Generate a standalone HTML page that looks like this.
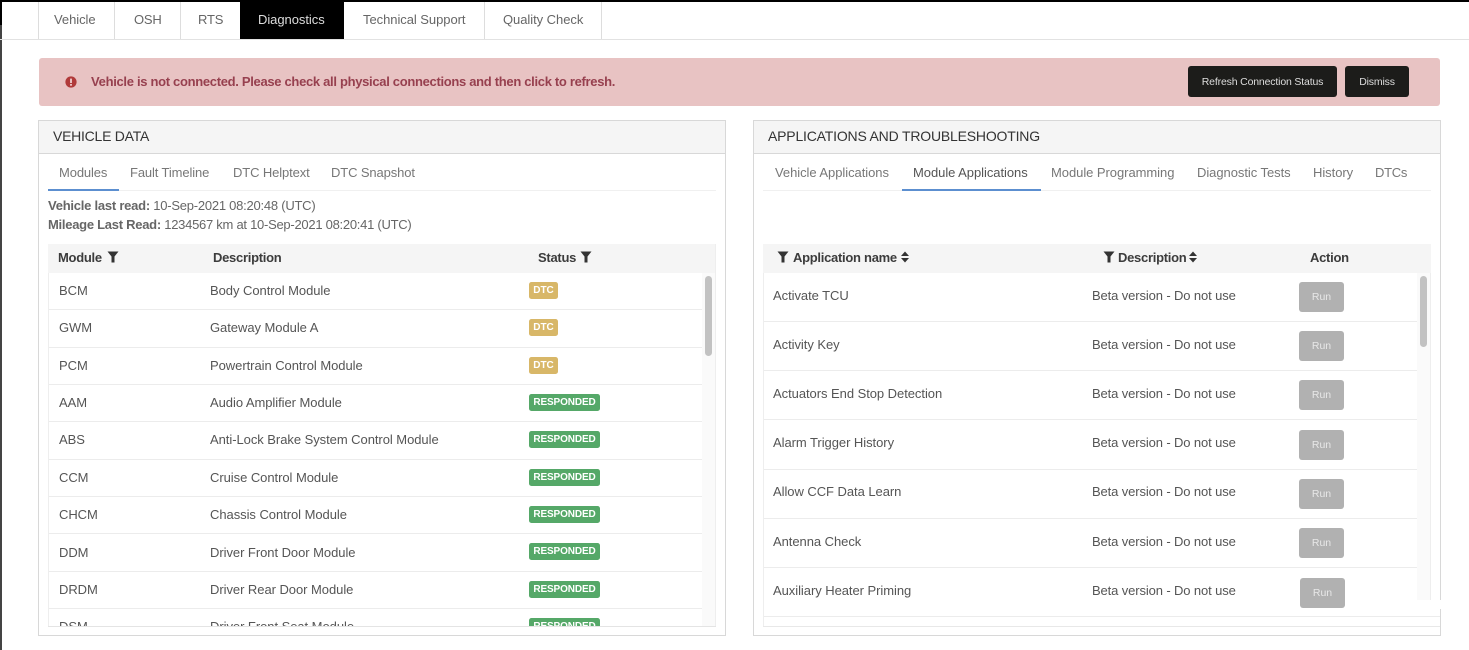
<!DOCTYPE html>
<html><head><meta charset="utf-8">
<style>
html,body{margin:0;padding:0;background:#fff}
body{width:1469px;height:650px;overflow:hidden;position:relative;font-family:"Liberation Sans",sans-serif;font-size:13px;color:#555}
.a,.t{position:absolute;white-space:nowrap}
.t{line-height:16px;letter-spacing:-.05px}
.b{position:absolute;box-sizing:border-box}
.g{color:#666}
.tb{color:#777;letter-spacing:-.12px}
.hd{font-weight:bold;color:#3c3c3c;letter-spacing:-.28px}
.row{position:absolute;height:1px;background:#ececec}
.badge{position:absolute;left:529px;height:17px;border-radius:2.5px;color:#fff;font-size:10px;font-weight:bold;line-height:18px;text-align:center}
.dtc{width:29px;background:#d8b768}
.res{width:71px;background:#55a868;letter-spacing:-.12px}
.run{position:absolute;width:45px;height:30px;background:#b1b1b1;border-radius:3px;color:#e8e8e8;font-size:10.5px;line-height:30px;text-align:center}
.btn{position:absolute;top:66px;height:31px;background:#1c1c1a;border-radius:3px;color:#ddd;font-size:10.5px;line-height:32px;text-align:center;letter-spacing:-.16px}
svg{position:absolute}
</style></head><body>
<div class="b" style="left:0;top:0;width:1469px;height:2px;background:#000"></div>
<div class="b" style="left:0;top:0;width:1.5px;height:650px;background:#444"></div>
<div class="b" style="left:0;top:0;width:1.5px;height:25px;background:#000"></div>
<div class="b" style="left:0;top:39px;width:1469px;height:1px;background:#e2e2e2"></div>
<div class="b" style="left:38px;top:2px;width:1px;height:37px;background:#ddd"></div>
<div class="b" style="left:114px;top:2px;width:1px;height:37px;background:#ddd"></div>
<div class="b" style="left:180px;top:2px;width:1px;height:37px;background:#ddd"></div>
<div class="b" style="left:240px;top:2px;width:104px;height:37px;background:#000"></div>
<div class="b" style="left:484px;top:2px;width:1px;height:37px;background:#ddd"></div>
<div class="b" style="left:601px;top:2px;width:1px;height:37px;background:#ddd"></div>
<div class="t g" style="left:54px;top:12px">Vehicle</div>
<div class="t g" style="left:134px;top:12px;letter-spacing:-.2px">OSH</div>
<div class="t g" style="left:198px;top:12px;letter-spacing:-.2px">RTS</div>
<div class="t" style="left:258px;top:12px;color:#ddd">Diagnostics</div>
<div class="t g" style="left:363px;top:12px">Technical Support</div>
<div class="t g" style="left:503px;top:12px">Quality Check</div>

<div class="b" style="left:39px;top:58px;width:1401px;height:48px;background:#e8c3c3;border-radius:3px"></div>
<svg style="left:65px;top:76px" width="12" height="12" viewBox="0 0 12 12"><circle cx="6" cy="6" r="5.6" fill="#b03a3a"/><rect x="5.1" y="2.6" width="1.8" height="4.4" fill="#f0d0d0"/><rect x="5.1" y="8" width="1.8" height="1.7" fill="#f0d0d0"/></svg>
<div class="t" style="left:91px;top:74px;font-weight:bold;color:#97404f;letter-spacing:-.31px">Vehicle is not connected. Please check all physical connections and then click to refresh.</div>
<div class="btn" style="left:1188px;width:149px">Refresh Connection Status</div>
<div class="btn" style="left:1345px;width:64px">Dismiss</div>

<!-- left panel -->
<div class="b" style="left:38px;top:120px;width:688px;height:516px;border:1px solid #d8d8d8;background:#fff"></div>
<div class="b" style="left:39px;top:121px;width:686px;height:33px;background:#f5f5f5;border-bottom:1px solid #d8d8d8"></div>
<div class="t" style="left:53px;top:128px;font-size:14px;color:#333;letter-spacing:-.25px">VEHICLE DATA</div>
<div class="b" style="left:48px;top:190px;width:668px;height:1px;background:#f0f0f0"></div>
<div class="b" style="left:48px;top:189px;width:71px;height:2px;background:#5c8fd0"></div>
<div class="t tb" style="left:59px;top:165px">Modules</div>
<div class="t tb" style="left:130px;top:165px">Fault Timeline</div>
<div class="t tb" style="left:233px;top:165px">DTC Helptext</div>
<div class="t tb" style="left:331px;top:165px">DTC Snapshot</div>
<div class="t" style="left:48px;top:198px;color:#666;letter-spacing:-.24px"><b>Vehicle last read:</b> 10-Sep-2021 08:20:48 (UTC)</div>
<div class="t" style="left:48px;top:217px;color:#666;letter-spacing:-.27px"><b>Mileage Last Read:</b> 1234567 km at 10-Sep-2021 08:20:41 (UTC)</div>
<div class="b" style="left:48px;top:244px;width:668px;height:29px;background:#f5f5f5"></div>
<div class="b" style="left:48px;top:273px;width:1px;height:353px;background:#eee"></div>
<div class="b" style="left:715px;top:244px;width:1px;height:382px;background:#eee"></div>
<div class="t hd" style="left:58px;top:250px">Module</div>
<svg style="left:107px;top:251px" width="12" height="12" viewBox="0 0 12 12"><path d="M.5 .5H11.500L7.500 5.500V11.500H4.500V5.500Z" fill="#333"/></svg>
<div class="t hd" style="left:213px;top:250px">Description</div>
<div class="t hd" style="left:538px;top:250px">Status</div>
<svg style="left:580px;top:251px" width="12" height="12" viewBox="0 0 12 12"><path d="M.5 .5H11.500L7.500 5.500V11.500H4.500V5.500Z" fill="#333"/></svg>
<div class="b" style="left:702px;top:273px;width:13px;height:353px;background:#fafafa"></div>
<div class="b" style="left:705px;top:276px;width:7px;height:80px;background:#c2c2c2;border-radius:4px"></div>

<div class="t" style="left:59px;top:283px">BCM</div><div class="t" style="left:210px;top:283px">Body Control Module</div><div class="badge dtc" style="top:282px">DTC</div><div class="row" style="left:49px;top:309px;width:653px"></div>
<div class="t" style="left:59px;top:320px">GWM</div><div class="t" style="left:210px;top:320px">Gateway Module A</div><div class="badge dtc" style="top:319px">DTC</div><div class="row" style="left:49px;top:347px;width:653px"></div>
<div class="t" style="left:59px;top:358px">PCM</div><div class="t" style="left:210px;top:358px">Powertrain Control Module</div><div class="badge dtc" style="top:357px">DTC</div><div class="row" style="left:49px;top:384px;width:653px"></div>
<div class="t" style="left:59px;top:395px">AAM</div><div class="t" style="left:210px;top:395px">Audio Amplifier Module</div><div class="badge res" style="top:394px">RESPONDED</div><div class="row" style="left:49px;top:421px;width:653px"></div>
<div class="t" style="left:59px;top:432px">ABS</div><div class="t" style="left:210px;top:432px">Anti-Lock Brake System Control Module</div><div class="badge res" style="top:431px">RESPONDED</div><div class="row" style="left:49px;top:459px;width:653px"></div>
<div class="t" style="left:59px;top:470px">CCM</div><div class="t" style="left:210px;top:470px">Cruise Control Module</div><div class="badge res" style="top:469px">RESPONDED</div><div class="row" style="left:49px;top:496px;width:653px"></div>
<div class="t" style="left:59px;top:507px">CHCM</div><div class="t" style="left:210px;top:507px">Chassis Control Module</div><div class="badge res" style="top:506px">RESPONDED</div><div class="row" style="left:49px;top:533px;width:653px"></div>
<div class="t" style="left:59px;top:545px">DDM</div><div class="t" style="left:210px;top:545px">Driver Front Door Module</div><div class="badge res" style="top:543px">RESPONDED</div><div class="row" style="left:49px;top:571px;width:653px"></div>
<div class="t" style="left:59px;top:582px">DRDM</div><div class="t" style="left:210px;top:582px">Driver Rear Door Module</div><div class="badge res" style="top:581px">RESPONDED</div><div class="row" style="left:49px;top:608px;width:653px"></div>
<div class="a" style="left:49px;top:609px;width:653px;height:17px;overflow:hidden">
<div class="t" style="left:10px;top:10px">DSM</div><div class="t" style="left:161px;top:10px">Driver Front Seat Module</div><div class="badge res" style="left:480px;top:9px">RESPONDED</div></div>
<div class="b" style="left:48px;top:626px;width:668px;height:1px;background:#e4e4e4"></div>

<!-- right panel -->
<div class="b" style="left:753px;top:120px;width:688px;height:516px;border:1px solid #d8d8d8;background:#fff"></div>
<div class="b" style="left:754px;top:121px;width:686px;height:33px;background:#f5f5f5;border-bottom:1px solid #d8d8d8"></div>
<div class="t" style="left:768px;top:128px;font-size:14px;color:#333;letter-spacing:-.19px">APPLICATIONS AND TROUBLESHOOTING</div>
<div class="b" style="left:763px;top:190px;width:668px;height:1px;background:#f0f0f0"></div>
<div class="b" style="left:902px;top:189px;width:139px;height:2px;background:#5c8fd0"></div>
<div class="t" style="left:775px;top:165px;color:#777">Vehicle Applications</div>
<div class="t" style="left:913px;top:165px;color:#555">Module Applications</div>
<div class="t" style="left:1051px;top:165px;color:#777">Module Programming</div>
<div class="t" style="left:1197px;top:165px;color:#777">Diagnostic Tests</div>
<div class="t" style="left:1313px;top:165px;color:#777">History</div>
<div class="t" style="left:1375px;top:165px;color:#777;letter-spacing:-.3px">DTCs</div>
<div class="b" style="left:763px;top:244px;width:668px;height:29px;background:#f5f5f5"></div>
<div class="b" style="left:763px;top:273px;width:1px;height:353px;background:#eee"></div>
<div class="b" style="left:1430px;top:273px;width:1px;height:353px;background:#eee"></div>
<svg style="left:777px;top:251px" width="12" height="12" viewBox="0 0 12 12"><path d="M.5 .5H11.500L7.500 5.500V11.500H4.500V5.500Z" fill="#333"/></svg>
<div class="t hd" style="left:793px;top:250px">Application name</div>
<svg style="left:900px;top:251px" width="10" height="12" viewBox="0 0 10 12"><path d="M5 .5L9 5H1ZM5 11.500L9 7H1Z" fill="#333"/></svg>
<svg style="left:1103px;top:251px" width="12" height="12" viewBox="0 0 12 12"><path d="M.5 .5H11.500L7.500 5.500V11.500H4.500V5.500Z" fill="#333"/></svg>
<div class="t hd" style="left:1118px;top:250px">Description</div>
<svg style="left:1188px;top:251px" width="10" height="12" viewBox="0 0 10 12"><path d="M5 .5L9 5H1ZM5 11.500L9 7H1Z" fill="#333"/></svg>
<div class="t hd" style="left:1310px;top:250px">Action</div>
<div class="b" style="left:1417px;top:273px;width:13px;height:353px;background:#fafafa"></div>
<div class="b" style="left:1420px;top:276px;width:7px;height:71px;background:#c2c2c2;border-radius:4px"></div>

<div class="t" style="left:773px;top:288px">Activate TCU</div><div class="t" style="left:1092px;top:288px;letter-spacing:-.12px">Beta version - Do not use</div><div class="run" style="left:1299px;top:282px">Run</div><div class="row" style="left:764px;top:321px;width:653px"></div>
<div class="t" style="left:773px;top:337px">Activity Key</div><div class="t" style="left:1092px;top:337px;letter-spacing:-.12px">Beta version - Do not use</div><div class="run" style="left:1299px;top:331px">Run</div><div class="row" style="left:764px;top:370px;width:653px"></div>
<div class="t" style="left:773px;top:386px">Actuators End Stop Detection</div><div class="t" style="left:1092px;top:386px;letter-spacing:-.12px">Beta version - Do not use</div><div class="run" style="left:1299px;top:380px">Run</div><div class="row" style="left:764px;top:419px;width:653px"></div>
<div class="t" style="left:773px;top:435px">Alarm Trigger History</div><div class="t" style="left:1092px;top:435px;letter-spacing:-.12px">Beta version - Do not use</div><div class="run" style="left:1299px;top:430px">Run</div><div class="row" style="left:764px;top:469px;width:653px"></div>
<div class="t" style="left:773px;top:484px">Allow CCF Data Learn</div><div class="t" style="left:1092px;top:484px;letter-spacing:-.12px">Beta version - Do not use</div><div class="run" style="left:1299px;top:479px">Run</div><div class="row" style="left:764px;top:518px;width:653px"></div>
<div class="t" style="left:773px;top:534px">Antenna Check</div><div class="t" style="left:1092px;top:534px;letter-spacing:-.12px">Beta version - Do not use</div><div class="run" style="left:1299px;top:528px">Run</div><div class="row" style="left:764px;top:567px;width:653px"></div>
<div class="t" style="left:773px;top:583px">Auxiliary Heater Priming</div><div class="t" style="left:1092px;top:583px;letter-spacing:-.12px">Beta version - Do not use</div><div class="run" style="left:1300px;top:578px">Run</div><div class="row" style="left:764px;top:616px;width:676px"></div>
<div class="b" style="left:1407px;top:600px;width:35px;height:9px;background:#fff"></div>
<div class="b" style="left:1407px;top:609px;width:33px;height:7px;background:#fff"></div>
<div class="b" style="left:1407px;top:617px;width:33px;height:9px;background:#fff"></div>
<div class="b" style="left:763px;top:626px;width:677px;height:1px;background:#e8e8e8"></div>
</body></html>
